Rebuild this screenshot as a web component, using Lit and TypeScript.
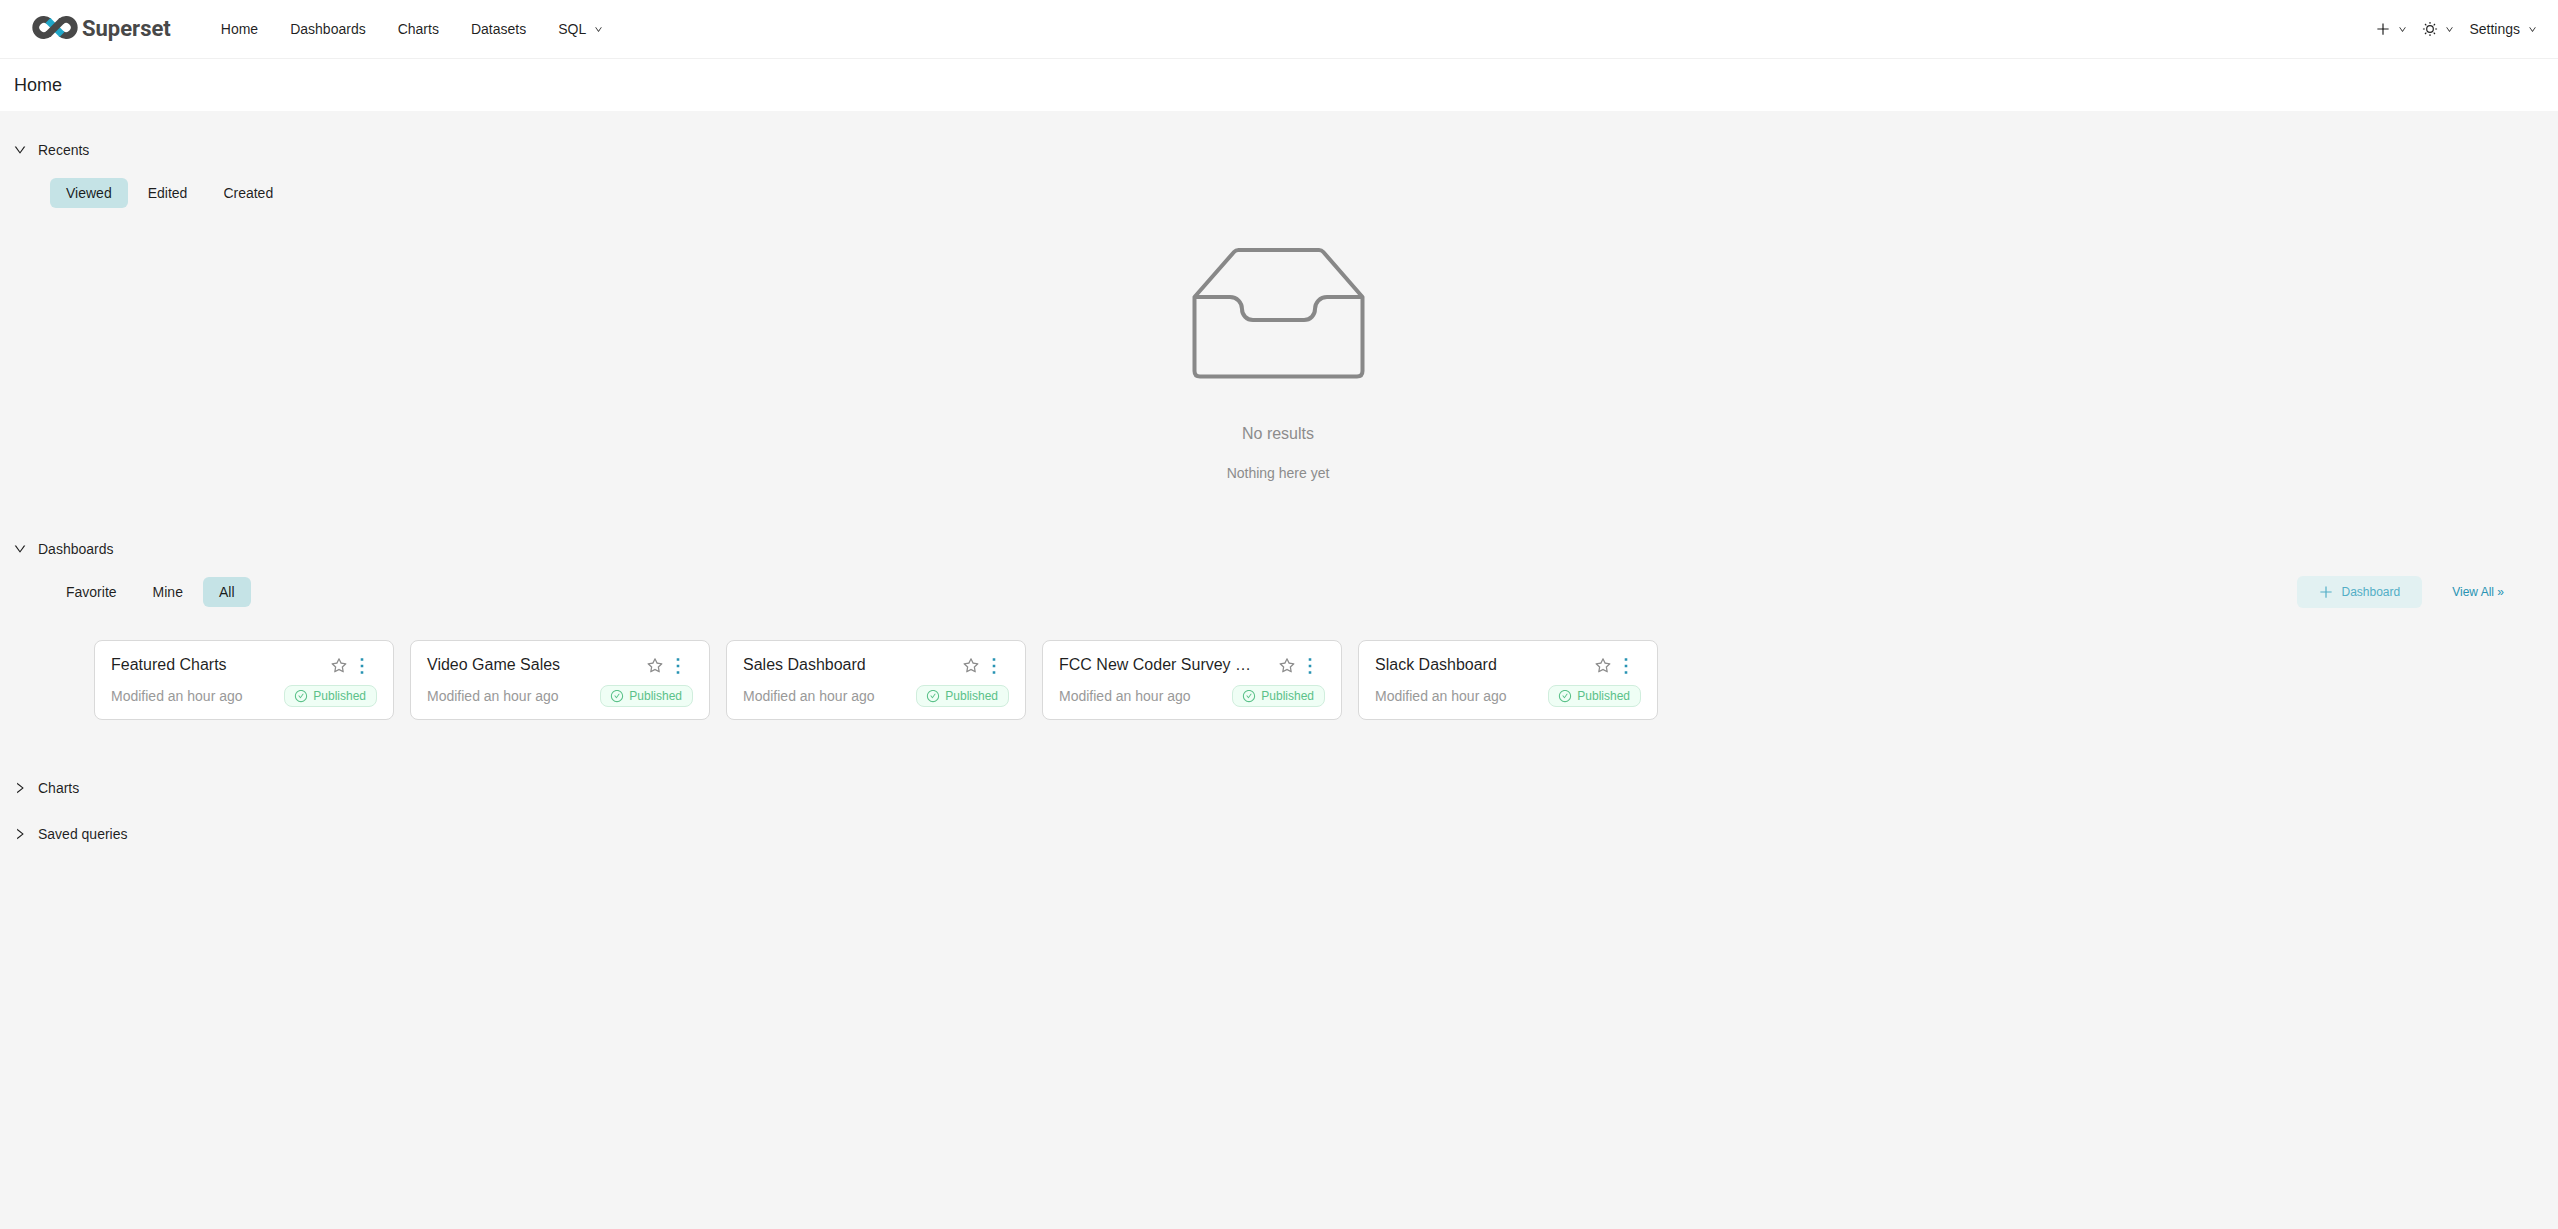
import { LitElement, html, css, svg, nothing } from "lit";
import { customElement, property, state } from "lit/decorators.js";
import { classMap } from "lit/directives/class-map.js";

const ICONS = {
  down: svg`<path d="M884 256h-75c-5.100 0-9.900 2.500-12.900 6.600L512 654.200 227.900 262.600c-3-4.100-7.800-6.600-12.900-6.600h-75c-6.500 0-10.300 7.400-6.500 12.700l352.600 486.100c12.800 17.600 39 17.600 51.700 0l352.600-486.100c3.900-5.300.100-12.700-6.400-12.700z"/>`,
  right: svg`<path d="M765.700 486.800L314.900 134.700A7.970 7.970 0 0 0 302 141v77.300c0 4.900 2.300 9.600 6.100 12.600l360 281.100-360 281.100c-3.900 3-6.100 7.700-6.100 12.600V883c0 6.700 7.700 10.400 12.900 6.300l450.800-352.100a31.960 31.960 0 0 0 0-50.400z"/>`,
  plus: svg`<path d="M482 152h60q8 0 8 8v704q0 8-8 8h-60q-8 0-8-8V160q0-8 8-8z"/><path d="M160 474h704q8 0 8 8v60q0 8-8 8H160q-8 0-8-8v-60q0-8 8-8z"/>`,
  star: svg`<path d="M908.100 353.100l-253.900-36.900L540.700 86.100c-3.100-6.300-8.200-11.400-14.500-14.500-15.800-7.800-35-1.300-42.900 14.500L369.800 316.200l-253.900 36.900c-7 1-13.400 4.300-18.300 9.300a32.050 32.050 0 0 0 .600 45.300l183.700 179.100-43.400 252.900a31.950 31.950 0 0 0 46.400 33.700L512 754l227.100 119.400c6.200 3.300 13.400 4.400 20.300 3.200 17.400-3 29.100-19.500 26.100-36.900l-43.400-252.900 183.700-179.100c5-4.900 8.300-11.300 9.300-18.300 2.700-17.500-9.500-33.700-27-36.300zM664.800 561.600l36.100 210.300L512 672.700 323.100 772l36.100-210.300-152.800-149L417.600 382 512 190.700 606.400 382l211.200 30.700-152.800 148.900z"/>`,
  check: svg`<path d="M699 353h-46.900c-10.200 0-19.900 4.900-25.900 13.300L469 584.300l-71.200-98.800c-6-8.300-15.600-13.300-25.900-13.300H325c-6.500 0-10.300 7.400-6.500 12.700l124.600 172.800a31.800 31.800 0 0 0 51.700 0l210.600-292c3.900-5.300.100-12.700-6.400-12.700z"/><path d="M512 64C264.600 64 64 264.600 64 512s200.600 448 448 448 448-200.600 448-448S759.400 64 512 64zm0 820c-205.400 0-372-166.600-372-372s166.600-372 372-372 372 166.600 372 372-166.600 372-372 372z"/>`,
  more: svg`<path d="M457 180h110v110h-110zM457 457h110v110h-110zM457 734h110v110h-110z"/>`,
  sun: svg`<g fill="none" stroke="currentColor" stroke-width="76"><circle cx="512" cy="512" r="212"/><path d="M512 60v120M512 844v120M60 512h120M844 512h120M192 192l85 85M747 747l85 85M192 832l85-85M747 277l85-85"/></g>`,
};

type IconName = keyof typeof ICONS;

@customElement("ui-icon")
export class UiIcon extends LitElement {
  @property() name: IconName = "down";

  static styles = css`
    :host { display: inline-flex; flex: none; width: 14px; height: 14px; }
    .glyph { display: block; width: 100%; height: 100%; fill: currentColor; }
  `;

  render() {
    return html`<svg class="glyph" viewBox="0 0 1024 1024" aria-hidden="true">${ICONS[this.name]}</svg>`;
  }
}

@customElement("top-bar")
export class TopBar extends LitElement {
  static styles = css`
    :host { display: block; background: #fff; border-bottom: 1px solid #f0f0f0; }
    .bar { display: flex; align-items: center; justify-content: space-between; height: 58px; padding: 0 21px 0 32px; }
    .main, .links, .tools, .item, .brand { display: flex; align-items: center; }
    .main { gap: 50px; }
    .links { gap: 32px; }
    .tools { gap: 15px; }
    .brand { gap: 4px; color: #484848; text-decoration: none; }
    .mark { display: block; width: 46px; height: 23px; margin-bottom: 3px; }
    .word { font: 700 22px/24px Roboto, "Liberation Sans", sans-serif; }
    .item {
      gap: 8px; padding: 0; border: 0; background: none; color: rgba(0, 0, 0, 0.88);
      font: inherit; line-height: 22px; text-decoration: none; cursor: pointer;
    }
    .item.compact { gap: 7px; }
    .large { width: 16px; height: 16px; }
    .caret { width: 9px; height: 9px; }
  `;

  render() {
    return html`
      <header class="bar">
        <div class="main">
          <a class="brand" href="#home">
            <svg class="mark" viewBox="0 0 46 23" fill="none" stroke-width="7" aria-hidden="true">
              <path stroke="#484848" d="M17 5.400A8 8 0 1 0 17 17.600M29 5.400A8 8 0 1 1 29 17.600" />
              <path stroke="#20a7c9" d="M16 4.600L30 18.400" />
              <path stroke="#484848" d="M16 18.500L30 4.500" />
            </svg>
            <span class="word">Superset</span>
          </a>
          <nav class="links">
            ${["Home", "Dashboards", "Charts", "Datasets"].map(
              (label) => html`<a class="item" href="#${label.toLowerCase()}">${label}</a>`
            )}
            <button class="item">SQL<ui-icon class="caret" name="down"></ui-icon></button>
          </nav>
        </div>
        <div class="tools">
          ${(["plus", "sun"] as IconName[]).map(
            (name) => html`<button class="item compact" aria-label=${name === "plus" ? "Add" : "Theme"}>
              <ui-icon class="large" name=${name}></ui-icon><ui-icon class="caret" name="down"></ui-icon>
            </button>`
          )}
          <button class="item">Settings<ui-icon class="caret" name="down"></ui-icon></button>
        </div>
      </header>
    `;
  }
}

@customElement("pill-tabs")
export class PillTabs extends LitElement {
  @property({ attribute: false }) tabs: string[] = [];
  @property() active = "";

  static styles = css`
    :host { display: flex; gap: 4px; }
    .tab {
      height: 30px; padding: 0 16px; border: 0; border-radius: 6px; background: none;
      color: rgba(0, 0, 0, 0.88); font: inherit; cursor: pointer;
    }
    .tab.on { background: #c5e3e6; }
  `;

  render() {
    return this.tabs.map(
      (tab) => html`<button
        class=${classMap({ tab: true, on: tab === this.active })}
        aria-pressed=${tab === this.active ? "true" : "false"}
        @click=${() => (this.active = tab)}
      >${tab}</button>`
    );
  }
}

@customElement("fold-section")
export class FoldSection extends LitElement {
  @property() heading = "";
  @property({ type: Boolean }) open = false;

  static styles = css`
    :host { display: block; }
    .title { margin: 0; font: inherit; }
    .head {
      display: flex; align-items: center; gap: 11px; width: 100%; padding: 12px 13px; border: 0;
      background: none; color: rgba(0, 0, 0, 0.88); font: inherit; line-height: 22px; text-align: left; cursor: pointer;
    }
    .body { padding: 4px 52px 0 50px; }
  `;

  render() {
    return html`
      <h2 class="title">
        <button class="head" aria-expanded=${this.open ? "true" : "false"} @click=${() => (this.open = !this.open)}>
          <ui-icon name=${this.open ? "down" : "right"}></ui-icon>${this.heading}
        </button>
      </h2>
      ${this.open ? html`<div class="body"><slot></slot></div>` : nothing}
    `;
  }
}

@customElement("dashboard-card")
export class DashboardCard extends LitElement {
  @property() name = "";
  @property() modified = "";

  static styles = css`
    :host { display: block; }
    .card { padding: 12px 16px; border: 1px solid #d9d9d9; border-radius: 8px; background: #fff; }
    .top, .meta, .actions, .tag { display: flex; align-items: center; }
    .top, .meta { justify-content: space-between; }
    .top { height: 24px; }
    .meta { height: 22px; margin-top: 8px; }
    .name {
      color: rgba(0, 0, 0, 0.88); font-size: 16px; line-height: 24px;
      text-decoration: none; white-space: nowrap;
    }
    .actions { gap: 2px; padding: 2px 3px 0 0; }
    .act { display: flex; padding: 0; border: 0; background: none; color: #8c8c8c; cursor: pointer; }
    .act.menu { color: #2893b3; }
    .star { width: 18px; height: 18px; }
    .dots { width: 24px; height: 24px; }
    .when { color: #999; line-height: 22px; }
    .tag {
      gap: 5px; padding: 0 10px 0 9px; border: 1px solid #d0eedd; border-radius: 8px; background: #effef5;
      color: #5ac189; font-size: 12px; line-height: 20px;
    }
  `;

  render() {
    return html`
      <article class="card">
        <div class="top">
          <a class="name" href="#dashboard">${this.name}</a>
          <div class="actions">
            <button class="act" aria-label="Favorite"><ui-icon class="star" name="star"></ui-icon></button>
            <button class="act menu" aria-label="More"><ui-icon class="dots" name="more"></ui-icon></button>
          </div>
        </div>
        <div class="meta">
          <span class="when">${this.modified}</span>
          <span class="tag"><ui-icon name="check"></ui-icon>Published</span>
        </div>
      </article>
    `;
  }
}

@customElement("app-root")
export class AppRoot extends LitElement {
  @state() private dashboards = [
    "Featured Charts",
    "Video Game Sales",
    "Sales Dashboard",
    "FCC New Coder Survey …",
    "Slack Dashboard",
  ];

  static styles = css`
    :host {
      display: block; min-height: 100vh; background: #f5f5f5; color: rgba(0, 0, 0, 0.88);
      font-family: "Liberation Sans", Arial, sans-serif; font-size: 14px; line-height: 22px;
    }
    .page-title { margin: 0; padding: 12px 14px; background: #fff; font-size: 18px; font-weight: 400; line-height: 28px; }
    .sections { padding-top: 16px; }
    .empty { display: flex; flex-direction: column; align-items: center; padding: 39px 0 42px; color: #8c8c8c; }
    .inbox { display: block; width: 173px; height: 131px; margin-bottom: 43px; }
    .empty-title { margin: 0 0 16px; font-size: 16px; line-height: 24px; }
    .empty-text { margin: 0; }
    .toolbar { display: flex; align-items: center; justify-content: space-between; height: 32px; }
    .side { display: flex; align-items: center; gap: 30px; padding-right: 2px; font-size: 12px; }
    .create {
      display: flex; align-items: center; gap: 7px; height: 32px; padding: 0 22px 0 21px; border: 0; border-radius: 6px;
      background: #e2f1f2; color: #52aec6; font: inherit; cursor: pointer;
    }
    .create-icon { width: 16px; height: 16px; }
    .all { color: #2893b3; text-decoration: none; }
    .cards { display: grid; grid-template-columns: repeat(auto-fill, 300px); gap: 16px; padding: 32px 42px 45px 44px; }
  `;

  render() {
    return html`
      <top-bar></top-bar>
      <h1 class="page-title">Home</h1>
      <main class="sections">
        <fold-section heading="Recents" open>
          <div class="toolbar">
            <pill-tabs .tabs=${["Viewed", "Edited", "Created"]} active="Viewed"></pill-tabs>
          </div>
          <div class="empty">
            <svg class="inbox" viewBox="0 0 173 131" fill="none" stroke="#888" stroke-width="4" stroke-linejoin="round" aria-hidden="true">
              <path d="M2.500 49L42 4Q43.800 2 46.500 2H127Q129.500 2 131.300 4L170.500 49V123Q170.500 128.500 165 128.500H8Q2.500 128.500 2.500 123Z" />
              <path d="M2.500 49H38C45 49 50 54.500 50 61C50 67 54.500 72 61 72H112C118.500 72 123 67 123 61C123 54.500 128 49 135 49H170.500" />
            </svg>
            <p class="empty-title">No results</p>
            <p class="empty-text">Nothing here yet</p>
          </div>
        </fold-section>
        <fold-section heading="Dashboards" open>
          <div class="toolbar">
            <pill-tabs .tabs=${["Favorite", "Mine", "All"]} active="All"></pill-tabs>
            <div class="side">
              <button class="create"><ui-icon class="create-icon" name="plus"></ui-icon>Dashboard</button>
              <a class="all" href="#dashboards">View All »</a>
            </div>
          </div>
          <div class="cards">
            ${this.dashboards.map(
              (name) => html`<dashboard-card name=${name} modified="Modified an hour ago"></dashboard-card>`
            )}
          </div>
        </fold-section>
        <fold-section heading="Charts"></fold-section>
        <fold-section heading="Saved queries"></fold-section>
      </main>
    `;
  }
}
